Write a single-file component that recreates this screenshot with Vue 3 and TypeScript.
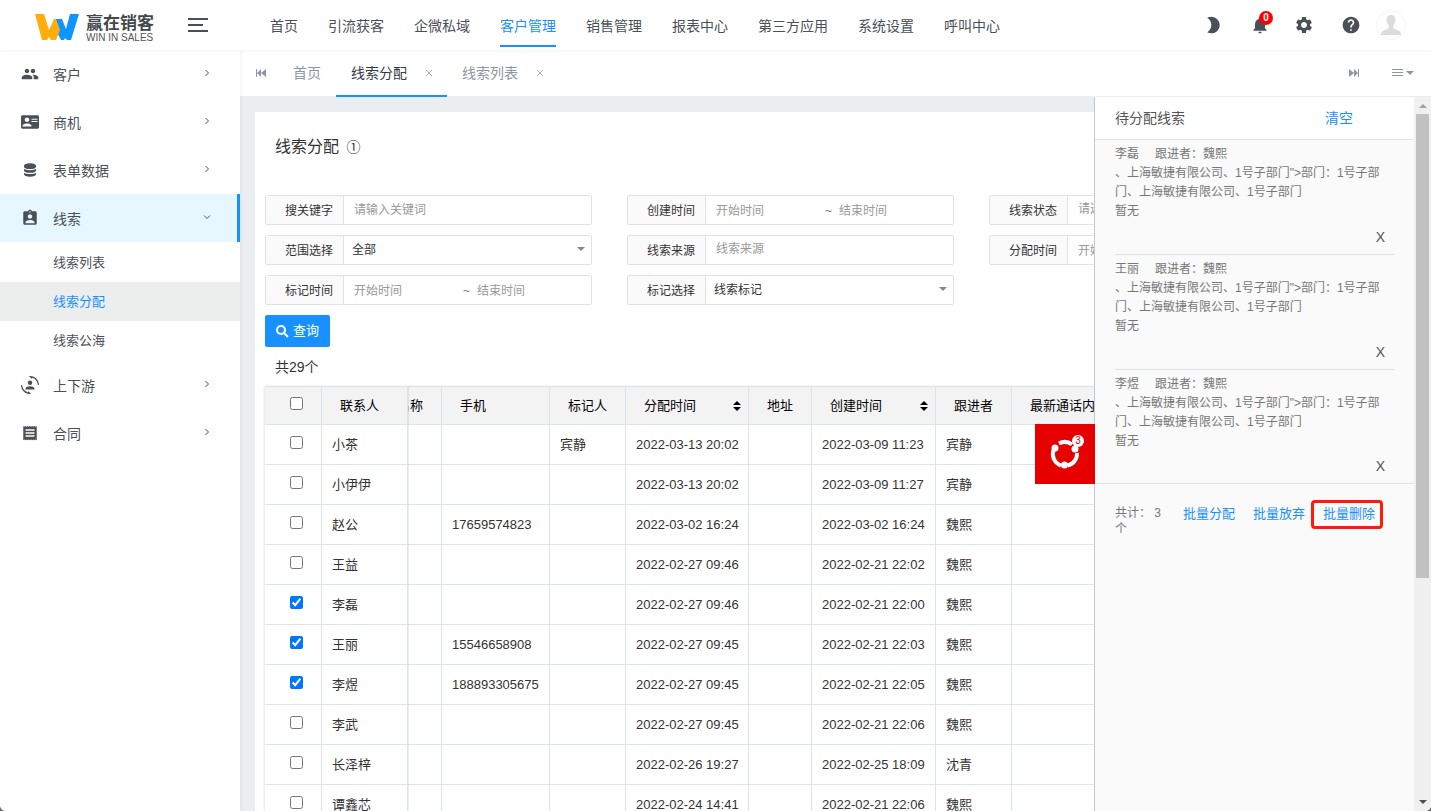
<script setup lang="ts">
import { computed, ref } from 'vue'

interface MenuItem { label: string; icon: string; open?: boolean; children?: string[] }
interface Filter { id: string; label: string; kind: 'text' | 'picker' | 'select' | 'range'; hint?: string }
interface Lead { name: string; phone: string; marker: string; assigned: string; created: string; owner: string; picked: boolean }

const navItems = ['首页', '引流获客', '企微私域', '客户管理', '销售管理', '报表中心', '第三方应用', '系统设置', '呼叫中心']
const activeNav = ref('客户管理')

const tabs = ref(['首页', '线索分配', '线索列表'])
const activeTab = ref('线索分配')
const closeTab = (tab: string) => { tabs.value = tabs.value.filter((t) => t !== tab) }

const menu: MenuItem[] = [
  { label: '客户', icon: 'group' },
  { label: '商机', icon: 'card' },
  { label: '表单数据', icon: 'data' },
  { label: '线索', icon: 'badge', open: true, children: ['线索列表', '线索分配', '线索公海'] },
  { label: '上下游', icon: 'cycle' },
  { label: '合同', icon: 'receipt' },
]
const activeSub = ref('线索分配')

const filters: Filter[] = [
  { id: 'keyword', label: '搜关键字', kind: 'text', hint: '请输入关键词' },
  { id: 'created', label: '创建时间', kind: 'range' },
  { id: 'status', label: '线索状态', kind: 'picker', hint: '请选择' },
  { id: 'scope', label: '范围选择', kind: 'select', hint: '全部' },
  { id: 'source', label: '线索来源', kind: 'picker', hint: '线索来源' },
  { id: 'assigned', label: '分配时间', kind: 'range' },
  { id: 'marked', label: '标记时间', kind: 'range' },
  { id: 'mark', label: '标记选择', kind: 'select', hint: '线索标记' },
]

const lead = (name: string, phone: string, marker: string, assigned: string, created: string, owner: string, picked = false): Lead =>
  ({ name, phone, marker, assigned: '2022-' + assigned, created: '2022-' + created, owner, picked })

const leads = ref<Lead[]>([
  lead('小茶', '', '宾静', '03-13 20:02', '03-09 11:23', '宾静'),
  lead('小伊伊', '', '', '03-13 20:02', '03-09 11:27', '宾静'),
  lead('赵公', '17659574823', '', '03-02 16:24', '03-02 16:24', '魏熙'),
  lead('王益', '', '', '02-27 09:46', '02-21 22:02', '魏熙'),
  lead('李磊', '', '', '02-27 09:46', '02-21 22:00', '魏熙', true),
  lead('王丽', '15546658908', '', '02-27 09:45', '02-21 22:03', '魏熙', true),
  lead('李煜', '188893305675', '', '02-27 09:45', '02-21 22:05', '魏熙', true),
  lead('李武', '', '', '02-27 09:45', '02-21 22:06', '魏熙'),
  lead('长泽梓', '', '', '02-26 19:27', '02-25 18:09', '沈青'),
  lead('谭鑫芯', '', '', '02-24 14:41', '02-21 22:06', '魏熙'),
])
const picked = computed(() => leads.value.filter((l) => l.picked))
const clearAll = () => leads.value.forEach((l) => { l.picked = false })
</script>

<template>
  <div class="app">
    <header class="topbar">
      <a class="logo" href="#" aria-label="赢在销客">
        <svg class="logo-mark" viewBox="0 0 44 26" aria-hidden="true">
          <path fill="#0f95ff" d="M19 5h8l4 10 4-15h9l-8 26h-4l-2-2-1 2h-3l-6-11z" />
          <path fill="#ffae0c" d="M0 0h9l5 16 5-11h2l4 11-4 10h-5l-2-3-2 3H7z" />
        </svg>
        <span class="logo-text"><b>赢在销客</b><small>WIN IN SALES</small></span>
      </a>
      <button class="burger" aria-label="收起菜单"><i></i><i class="short"></i><i></i></button>
      <nav class="nav">
        <a v-for="n in navItems" :key="n" href="#" :class="{ active: n === activeNav }" @click.prevent="activeNav = n">{{ n }}</a>
      </nav>
      <div class="tools">
        <button class="tool" aria-label="夜间模式">
          <svg viewBox="0 0 24 24"><path d="M10 2c-1.82 0-3.53.5-5 1.35C7.99 5.08 10 8.3 10 12s-2.01 6.92-5 8.65C6.47 21.5 8.18 22 10 22c5.52 0 10-4.48 10-10S15.52 2 10 2z" /></svg>
        </button>
        <button class="tool bell" aria-label="通知">
          <svg viewBox="0 0 24 24"><path d="M12 22c1.1 0 2-.9 2-2h-4c0 1.1.89 2 2 2zm6-6v-5c0-3.07-1.64-5.64-4.5-6.32V4c0-.83-.67-1.5-1.5-1.5s-1.5.67-1.5 1.5v.68C7.63 5.36 6 7.92 6 11v5l-2 2v1h16v-1l-2-2z" /></svg>
          <span class="count">0</span>
        </button>
        <button class="tool" aria-label="设置">
          <svg viewBox="0 0 24 24"><path d="M19.14 12.94c.04-.3.06-.61.06-.94 0-.32-.02-.64-.07-.94l2.03-1.58c.18-.14.23-.41.12-.61l-1.92-3.32c-.12-.22-.37-.29-.59-.22l-2.39.96c-.5-.38-1.03-.7-1.62-.94l-.36-2.54c-.04-.24-.24-.41-.48-.41h-3.84c-.24 0-.43.17-.47.41l-.36 2.54c-.59.24-1.13.57-1.62.94l-2.39-.96c-.22-.08-.47 0-.59.22L2.74 8.87c-.12.21-.08.47.12.61l2.03 1.58c-.05.3-.09.63-.09.94s.02.64.07.94l-2.03 1.58c-.18.14-.23.41-.12.61l1.92 3.32c.12.22.37.29.59.22l2.39-.96c.5.38 1.03.7 1.62.94l.36 2.54c.05.24.24.41.48.41h3.84c.24 0 .44-.17.47-.41l.36-2.54c.59-.24 1.13-.56 1.62-.94l2.39.96c.22.08.47 0 .59-.22l1.92-3.32c.12-.22.07-.47-.12-.61l-2.01-1.58zM12 15.6c-1.98 0-3.6-1.62-3.6-3.6s1.62-3.6 3.6-3.6 3.6 1.62 3.6 3.6-1.62 3.6-3.6 3.6z" /></svg>
        </button>
        <button class="tool" aria-label="帮助">
          <svg viewBox="0 0 24 24"><path d="M12 2C6.48 2 2 6.48 2 12s4.48 10 10 10 10-4.48 10-10S17.52 2 12 2zm1 17h-2v-2h2v2zm2.07-7.75l-.9.92C13.45 12.9 13 13.5 13 15h-2v-.5c0-1.1.45-2.1 1.17-2.83l1.24-1.26c.37-.36.59-.86.59-1.41 0-1.1-.9-2-2-2s-2 .9-2 2H8c0-2.21 1.79-4 4-4s4 1.79 4 4c0 .88-.36 1.68-.93 2.25z" /></svg>
        </button>
        <button class="avatar" aria-label="个人中心">
          <svg viewBox="0 0 28 28"><path d="M14 4c3 0 4.500 2 4.300 5-.2 3-1 4.500-2 5.700-.3 2 .2 2.800 2 3.500 3 1.100 5.700 1.800 5.700 5.800H4c0-4 2.700-4.700 5.700-5.800 1.800-.7 2.300-1.500 2-3.500-1-1.200-1.800-2.700-2-5.700C9.500 6 11 4 14 4z" /></svg>
        </button>
      </div>
    </header>

    <div class="body">
      <aside class="sidebar">
        <template v-for="m in menu" :key="m.label">
          <button class="menu-item" :class="{ open: m.open }">
            <svg class="menu-icon" viewBox="0 0 24 24" aria-hidden="true">
              <path v-if="m.icon === 'group'" d="M16 11c1.660 0 2.990-1.340 2.990-3S17.660 5 16 5c-1.660 0-3 1.340-3 3s1.340 3 3 3zm-8 0c1.660 0 2.990-1.340 2.990-3S9.660 5 8 5C6.340 5 5 6.340 5 8s1.340 3 3 3zm0 2c-2.330 0-7 1.170-7 3.500V19h14v-2.500c0-2.330-4.670-3.500-7-3.500zm8 0c-.29 0-.62.02-.97.05 1.160.84 1.970 1.970 1.970 3.450V19h6v-2.500c0-2.330-4.670-3.500-7-3.500z" />
              <path v-else-if="m.icon === 'card'" d="M22 3H2C.9 3 0 3.900 0 5v14c0 1.100.9 2 2 2h20c1.100 0 2-.9 2-2V5c0-1.100-.9-2-2-2zM8 6c1.660 0 3 1.340 3 3s-1.340 3-3 3-3-1.340-3-3 1.340-3 3-3zm6 12H2v-1c0-2 4-3.100 6-3.100s6 1.100 6 3.100v1zm8-6h-8v-1.500h8V12zm0-3h-8V7.500h8V9z" />
              <path v-else-if="m.icon === 'data'" d="M12 3c4.700 0 8 1.300 8 3.200v1.300c0 1.900-3.300 3.200-8 3.200s-8-1.300-8-3.200V6.200C4 4.300 7.300 3 12 3zM4 10.300c1.800 1.300 4.600 1.900 8 1.900s6.200-.6 8-1.900v2.200c0 1.900-3.300 3.200-8 3.200s-8-1.300-8-3.200zm0 5.200c1.800 1.300 4.600 1.900 8 1.900s6.200-.6 8-1.900v2.300c0 1.900-3.300 3.200-8 3.200s-8-1.300-8-3.200z" />
              <path v-else-if="m.icon === 'badge'" d="M19 3h-4.180C14.400 1.840 13.300 1 12 1c-1.300 0-2.400.84-2.820 2H5c-1.100 0-2 .9-2 2v14c0 1.100.9 2 2 2h14c1.100 0 2-.9 2-2V5c0-1.100-.9-2-2-2zm-7 0c.55 0 1 .45 1 1s-.45 1-1 1-1-.45-1-1 .45-1 1-1zm0 4c1.660 0 3 1.340 3 3s-1.340 3-3 3-3-1.340-3-3 1.340-3 3-3zm6 12H6v-1.400c0-2 4-3.100 6-3.100s6 1.100 6 3.100V19z" />
              <g v-else-if="m.icon === 'cycle'">
                <circle cx="12" cy="9" r="3" />
                <path d="M6 18v-1.500c0-2 3.500-3 6-3s6 1 6 3V18zM11.500 0C18.500-.2 24 5 24 12h-1.500c-.3-4.600-3.200-8.200-7.200-9.600L14 3.700 10.500.1zM12.500 24C5.500 24.200 0 19 0 12h1.500c.3 4.600 3.200 8.200 7.200 9.600l1.300-1.300 3.500 3.600z" />
              </g>
              <path v-else d="M3 2.500l1.500 1L6 2.500l1.500 1 1.500-1 1.500 1 1.500-1 1.500 1 1.500-1 1.500 1 1.500-1 1.500 1 1.500-1v19l-1.500-1-1.500 1-1.500-1-1.500 1-1.500-1-1.500 1-1.500-1-1.500 1-1.500-1-1.500 1-1.500-1-1.500 1zM18 17v-2H6v2zm0-4v-2H6v2zm0-4V7H6v2z" fill-rule="evenodd" />
            </svg>
            <span>{{ m.label }}</span>
            <svg class="chevron" viewBox="0 0 10 10" aria-hidden="true"><path :d="m.open ? 'M2 3.500l3 3 3-3' : 'M3.500 2l3 3-3 3'" /></svg>
          </button>
          <ul v-if="m.children" class="submenu">
            <li v-for="c in m.children" :key="c">
              <a href="#" :class="{ active: c === activeSub }" @click.prevent="activeSub = c">{{ c }}</a>
            </li>
          </ul>
        </template>
      </aside>

      <main class="main">
        <div class="tabs">
          <button class="tabs-edge" aria-label="向左">
            <svg viewBox="0 0 12 10"><path d="M1 1h1v8H1zM6 1v8L2 5zM11 1v8L6 5z" /></svg>
          </button>
          <div v-for="t in tabs" :key="t" class="tab" :class="{ active: t === activeTab }">
            <button class="tab-label" @click="activeTab = t">{{ t }}</button>
            <button v-if="t !== '首页'" class="tab-close" :aria-label="'关闭' + t" @click="closeTab(t)">
              <svg viewBox="0 0 8 8"><path d="M1 1l6 6M7 1l-6 6" /></svg>
            </button>
          </div>
          <button class="tabs-edge last" aria-label="向右">
            <svg viewBox="0 0 12 10"><path d="M10 1h1v8h-1zM6 1v8l4-4zM1 1v8l5-4z" /></svg>
          </button>
          <button class="tabs-menu" aria-label="标签操作">
            <svg viewBox="0 0 24 10"><path d="M1 1h11v1H1zM1 4h11v1H1zM1 7h11v1H1zM15 3h8l-4 4z" /></svg>
          </button>
        </div>

        <section class="stage">
          <div class="card">
            <h1>线索分配 <span class="info">①</span></h1>
            <form class="filters" @submit.prevent>
              <div v-for="f in filters" :key="f.id" class="field">
                <label :for="f.id">{{ f.label }}</label>
                <div v-if="f.kind === 'range'" class="range">
                  <input :id="f.id" type="text" placeholder="开始时间" />
                  <span>~</span>
                  <input type="text" placeholder="结束时间" :aria-label="f.label + '结束'" />
                </div>
                <div v-else-if="f.kind === 'select'" class="select">
                  <select :id="f.id"><option>{{ f.hint }}</option></select>
                </div>
                <input v-else :id="f.id" type="text" :class="f.kind" :placeholder="f.hint" />
              </div>
            </form>
            <button class="query">
              <svg viewBox="0 0 13 13" aria-hidden="true"><circle cx="5" cy="5" r="4" /><path d="M8 8l4 4" /></svg>查询
            </button>
            <p class="total">共29个</p>
            <div class="table-wrap">
              <table>
                <colgroup>
                  <col class="w-check" /><col class="w-name" /><col class="w-company" /><col class="w-phone" /><col class="w-short" />
                  <col class="w-assigned" /><col class="w-address" /><col class="w-created" /><col class="w-short" /><col />
                </colgroup>
                <thead>
                  <tr>
                    <th class="check"><input type="checkbox" aria-label="全选" /></th>
                    <th class="pinned">联系人</th>
                    <th class="cut"><div>名称</div></th>
                    <th>手机</th>
                    <th>标记人</th>
                    <th class="sortable">分配时间<svg viewBox="0 0 8 12" aria-hidden="true"><path d="M0 5l4-4 4 4zM0 7h8l-4 4z" /></svg></th>
                    <th>地址</th>
                    <th class="sortable">创建时间<svg viewBox="0 0 8 12" aria-hidden="true"><path d="M0 5l4-4 4 4zM0 7h8l-4 4z" /></svg></th>
                    <th>跟进者</th>
                    <th>最新通话内容</th>
                  </tr>
                </thead>
                <tbody>
                  <tr v-for="l in leads" :key="l.name">
                    <td class="check"><input v-model="l.picked" type="checkbox" :aria-label="l.name" /></td>
                    <td class="pinned">{{ l.name }}</td>
                    <td></td>
                    <td>{{ l.phone }}</td>
                    <td>{{ l.marker }}</td>
                    <td>{{ l.assigned }}</td>
                    <td></td>
                    <td>{{ l.created }}</td>
                    <td>{{ l.owner }}</td>
                    <td></td>
                  </tr>
                </tbody>
              </table>
            </div>
          </div>

          <aside class="drawer">
            <button class="handle" aria-label="待分配线索">
              <svg viewBox="0 0 40 40" aria-hidden="true">
                <g fill="none" stroke="#fff" stroke-width="4">
                  <path d="M14 9.500a12 12 0 0 1 13 1" />
                  <path d="M32 19a12 12 0 0 1-9.500 12.500" />
                  <path d="M16 31.500A12 12 0 0 1 9 15" />
                </g>
                <circle cx="10" cy="14" r="3.500" fill="#fff" /><circle cx="19.500" cy="31" r="3.500" fill="#fff" /><circle cx="30" cy="15" r="3.500" fill="#fff" />
              </svg>
              <span class="bubble">{{ picked.length }}</span>
            </button>
            <div class="panel">
              <div class="panel-head"><span>待分配线索</span><button @click="clearAll">清空</button></div>
              <ul class="queue">
                <li v-for="l in picked" :key="l.name">
                  <p><span class="who">{{ l.name }}</span>跟进者：{{ l.owner }}</p>
                  <p>、上海敏捷有限公司、1号子部门"&gt;部门：1号子部门、上海敏捷有限公司、1号子部门</p>
                  <p>暂无</p>
                  <div class="remove"><button :aria-label="'移除' + l.name" @click="l.picked = false">X</button></div>
                </li>
              </ul>
              <div class="panel-foot">
                <span class="sum">共计： {{ picked.length }}个</span>
                <button>批量分配</button>
                <button>批量放弃</button>
                <button class="framed">批量删除</button>
              </div>
            </div>
            <div class="scrollbar" aria-hidden="true">
              <svg viewBox="0 0 17 17"><path fill="#a3a3a3" d="M5 11l4-4 4 4z" /></svg>
              <i></i>
              <svg viewBox="0 0 17 17"><path fill="#505050" d="M5 6h8l-4 4z" /></svg>
            </div>
          </aside>
        </section>
      </main>
    </div>
  </div>
</template>

<style>
html { background: #5d7172; }
body { margin: 0; }
</style>

<style scoped>
.app, .app * { box-sizing: border-box; }
.app {
  display: flex; flex-direction: column; height: 100vh; overflow: hidden;
  border-radius: 0 0 6px 6px; background: #fff; color: #333;
  font: 14px/20px "Liberation Sans", "Noto Sans CJK SC", sans-serif;
}
button { padding: 0; border: 0; background: none; color: inherit; font: inherit; cursor: pointer; }
a { color: inherit; text-decoration: none; }
ul, p, h1 { margin: 0; padding: 0; list-style: none; }
svg { display: block; }

.topbar { display: flex; flex: none; align-items: center; height: 50px; color: #4a5057; position: relative; z-index: 2; box-shadow: 0 1px 3px rgba(0, 0, 0, 0.05); background: #fff; }
.logo { display: flex; gap: 7px; width: 188px; padding: 4px 0 0 35px; align-items: center; }
.logo-mark { width: 44px; height: 26px; }
.logo-text { display: flex; flex-direction: column; padding-top: 1px; color: #44484d; white-space: nowrap; }
.logo-text b { font-size: 17px; line-height: 19px; }
.logo-text small { font-size: 10px; line-height: 9px; color: #555; }
.burger { display: flex; flex-direction: column; gap: 4px; width: 20px; }
.burger i { width: 20px; height: 2px; background: #4a5057; }
.burger .short { width: 15px; }
.nav { display: flex; gap: 30px; margin-left: 62px; height: 50px; }
.nav a { height: 47px; padding-top: 16px; border-bottom: 2px solid transparent; white-space: nowrap; }
.nav a.active { color: #1890ff; border-color: #1890ff; }
.tools { display: flex; align-items: center; margin-left: auto; padding-right: 25px; }
.tool { position: relative; width: 20px; margin-right: 27px; }
.tool svg { width: 20px; height: 20px; fill: #4a5057; }
.tool:nth-child(4) { margin-right: 15px; }
.tool.bell { margin-right: 24px; }
.count { position: absolute; top: -4px; left: 9px; width: 14px; height: 14px; border-radius: 7px; background: #f00; color: #fff; font: bold 10px/14px "Liberation Sans", sans-serif; }
.avatar { width: 30px; height: 30px; border-radius: 50%; border: 1px solid #f5f5f5; }
.avatar svg { width: 28px; height: 28px; fill: #dcdcdc; }

.body { display: flex; flex: 1; min-height: 0; }
.sidebar { flex: none; width: 240px; background: #fff; color: #4a5057; position: relative; z-index: 1; box-shadow: 1px 0 4px rgba(0, 0, 0, 0.06); }
.menu-item { display: flex; align-items: center; width: 100%; height: 48px; padding: 0 25px 0 21px; border-right: 3px solid transparent; text-align: left; }
.menu-item span { padding-top: 2px; }
.menu-item.open { background: #e6f7ff; border-color: #1890ff; }
.menu-icon { width: 18px; height: 18px; margin-right: 14px; fill: #4a5057; }
.chevron { width: 10px; height: 10px; margin: 0 0 3px auto; fill: none; stroke: #4a5057; stroke-width: 1; }
.submenu { padding: 1px 0; font-size: 13px; }
.submenu a { display: block; height: 39px; padding-left: 53px; line-height: 40px; }
.submenu a.active { background: #eceeee; color: #1890ff; }

.main { display: flex; flex-direction: column; flex: 1; min-width: 0; }
.tabs { display: flex; flex: none; height: 47px; border-bottom: 1px solid #ebedef; color: #8d96a5; background: #fff; }
.tabs svg { fill: #8d96a5; }
.tabs-edge { display: flex; align-items: center; justify-content: center; width: 38px; padding: 0 0 0 3px; }
.tabs-edge svg { width: 12px; height: 10px; }
.tabs-edge.last { margin-left: auto; }
.tabs-menu { width: 60px; padding: 0 0 0 20px; }
.tabs-menu svg { width: 24px; height: 10px; }
.tab { display: flex; align-items: center; height: 47px; padding: 0 15px; border-bottom: 2px solid transparent; gap: 18px; }
.tab.active { color: #333a44; border-color: #1890ff; }
.tab-close { margin-right: -1px; }
.tab-close svg { width: 8px; height: 8px; stroke: #b0b4ba; stroke-width: 1; }

.stage { position: relative; flex: 1; min-height: 0; overflow: hidden; padding: 15px 15px 0; background: #eaeef1; }
.card { height: 100%; padding: 24px 10px 0; overflow: hidden; background: #fff; }
h1 { padding-left: 10px; font-size: 16px; line-height: 22px; font-weight: normal; }
.info { margin-left: 3px; font-size: 14px; }
.filters { display: grid; grid-template-columns: repeat(3, minmax(0, 1fr)); gap: 10px 35px; margin-top: 37px; padding-right: 90px; font-size: 12px; }
.field { display: flex; height: 30px; border: 1px solid #e2e2e2; border-radius: 2px; }
.field label { flex: none; width: 78px; padding: 1px 10px 0 0; border-right: 1px solid #e2e2e2; background: #fafafa; line-height: 28px; text-align: right; }
.field input { min-width: 0; border: 0; outline: 0; padding: 0; background: none; color: #333; font: inherit; }
.field > input { flex: 1; padding: 0 10px; }
.field > .picker { padding-bottom: 2px; }
.field input::placeholder { color: #999; opacity: 1; }
.range { display: flex; align-items: center; flex: 1; min-width: 0; padding: 2px 0 0 10px; color: #777; }
.range input { width: 109px; }
.range span { margin-right: 7px; }
.select { position: relative; flex: 1; }
.select select { width: 100%; height: 28px; padding: 0 24px 0 8px; border: 0; outline: 0; appearance: none; background: none; color: #333; font: inherit; }
.select::after { content: ''; position: absolute; top: 11px; right: 6px; border: 4px solid transparent; border-top-color: #888; border-bottom: 0; pointer-events: none; }
.query { display: flex; align-items: center; gap: 4px; height: 32px; margin-top: 10px; padding: 0 11px; border-radius: 2px; background: #1890ff; color: #fff; font-size: 13px; }
.query svg { width: 13px; height: 13px; fill: none; stroke: #fff; stroke-width: 2; }
.total { margin: 10px 0 9px 10px; }

table { width: 100%; table-layout: fixed; border-collapse: separate; border-spacing: 0; font-size: 13px; box-shadow: -1px 0 2px rgba(0, 0, 0, 0.1); }
.w-check { width: 57px; } .w-name { width: 86px; } .w-company { width: 34px; } .w-phone { width: 108px; }
.w-short { width: 76px; } .w-assigned { width: 123px; } .w-created { width: 124px; } .w-address { width: 63px; }
th, td { border: solid #dce4ea; border-width: 0 1px 1px 0; padding: 0 10px; text-align: left; white-space: nowrap; }
th { height: 39px; padding-left: 18px; border-top-width: 1px; background: #f3f3f3; color: #000; font-weight: normal; }
td { height: 40px; }
.pinned { box-shadow: 1px 0 1px rgba(0, 0, 0, 0.06); clip-path: inset(0 -2px 0 0); }
.check { padding: 0 0 4px 7px; text-align: center; }
.check input { display: block; width: 13px; height: 13px; margin: 0 auto; }
.cut { padding: 0 18px 0 0; }
.cut div { display: flex; justify-content: flex-end; overflow: hidden; }
.sortable svg { float: right; width: 8px; height: 12px; margin: 4px -3px 0 0; }

.drawer { position: absolute; top: 0; right: 0; bottom: 0; display: flex; width: 337px; border-left: 1px solid #c4c8cb; background: #fafafa; color: #666; }
.handle { position: absolute; right: 100%; top: 327px; width: 60px; height: 60px; background: #e60000; }
.handle svg { width: 40px; height: 40px; margin: 10px; }
.bubble { position: absolute; top: 11px; left: 37px; width: 12px; height: 12px; border-radius: 6px; background: #fff; color: #e60000; font-size: 10px; line-height: 12px; }
.panel { flex: 1; min-width: 0; font-size: 12px; line-height: 19px; }
.panel-head { display: flex; justify-content: space-between; align-items: center; height: 43px; padding: 0 61px 0 20px; border-bottom: 1px solid #e2e2e2; background: #fff; font-size: 14px; color: #555; }
.panel-head button, .panel-foot button { color: #1890ff; }
.queue { border-bottom: 1px solid #e2e2e2; }
.queue li { margin: 0 19px 0 20px; padding-top: 5px; border-bottom: 1px solid #e2e2e2; color: #777; }
.queue li:last-child { border-bottom: 0; }
.who { margin-right: 16px; }
.remove { display: flex; align-items: flex-start; justify-content: flex-end; height: 33px; padding: 7px 10px 0 0; font-size: 14px; color: #555; }
.queue li:last-child .remove { height: 32px; padding-top: 6px; }
.panel-foot { display: flex; align-items: flex-start; padding: 16px 0 0 20px; font-size: 13px; line-height: 20px; }
.panel-foot button { margin: 4px 18px 0 0; white-space: nowrap; }
.sum { width: 50px; margin: 5px 18px 0 0; font-size: 12px; line-height: 16px; color: #777; }
.panel-foot .framed { height: 29px; margin: 0 0 0 -12px; padding: 0 5px 2px 9px; border: 3px solid #ff1b0a; border-radius: 4px; }
.scrollbar { display: flex; flex-direction: column; width: 17px; background: #f0f0f0; }
.scrollbar svg { flex: none; width: 17px; height: 17px; }
.scrollbar i { height: 65%; margin: 0 2px auto; background: #c1c1c1; }
</style>
